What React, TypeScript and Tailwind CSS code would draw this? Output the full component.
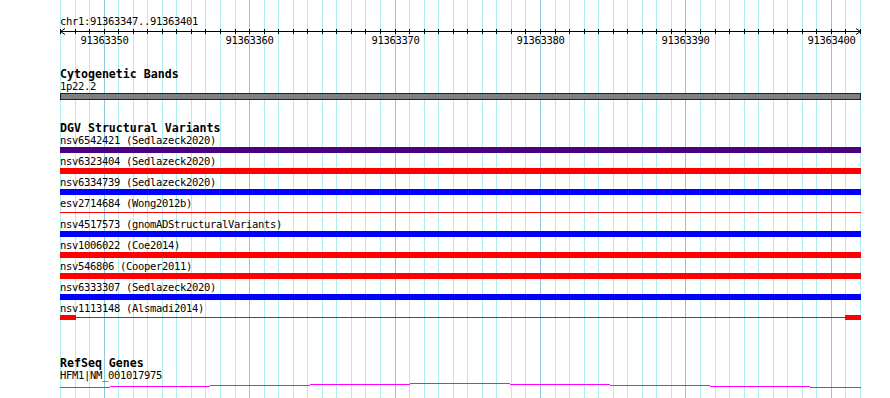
import React from "react";

const START = 91363347;
const N = 55;
const X0 = 60;
const W = 800;
const bx = (i: number) => Math.round(X0 + (i * W) / N);

const mono = { fontFamily: '"DejaVu Sans Mono", "Liberation Mono", monospace' };

function Grid() {
  const lines = [];
  for (let i = 0; i <= N; i++) {
    const major = (START + i) % 10 === 0;
    lines.push(
      <line
        key={i}
        x1={bx(i) + 0.5}
        x2={bx(i) + 0.5}
        y1={0}
        y2={398}
        stroke={major ? "#8cc6e2" : "#aeeeee"}
        strokeWidth={1}
      />
    );
  }
  return (
    <svg className="absolute left-0 top-0" width={890} height={398} shapeRendering="crispEdges">
      {lines}
    </svg>
  );
}

function Ruler() {
  const ticks = [];
  const labels = [];
  for (let i = 0; i <= N; i++) {
    ticks.push(<line key={i} x1={bx(i) + 0.5} x2={bx(i) + 0.5} y1={3} y2={8} stroke="#000" />);
    if ((START + i) % 10 === 0) {
      labels.push(
        <text
          key={"l" + i}
          x={bx(i) + 0.5}
          y={17.5}
          textAnchor="middle"
          fontSize={10.5}
          letterSpacing={-0.32}
          fill="#000"
          style={mono}
        >
          {START + i}
        </text>
      );
    }
  }
  return (
    <svg width={890} height={20} className="block -ml-[60px]" shapeRendering="crispEdges">
      <line x1={60} x2={861} y1={5.5} y2={5.5} stroke="#000" />
      <polyline points="65,2.5 60.5,5.5 65,8.5" fill="none" stroke="#000" shapeRendering="auto" />
      <polyline points="856,2.5 860.5,5.5 856,8.5" fill="none" stroke="#000" shapeRendering="auto" />
      {ticks}
      <g shapeRendering="auto">{labels}</g>
    </svg>
  );
}

type Row = { label: string; kind: "bar" | "line" | "ends"; color: string };

const rows: Row[] = [
  { label: "nsv6542421 (Sedlazeck2020)", kind: "bar", color: "#4b0082" },
  { label: "nsv6323404 (Sedlazeck2020)", kind: "bar", color: "#ff0000" },
  { label: "nsv6334739 (Sedlazeck2020)", kind: "bar", color: "#0000ff" },
  { label: "esv2714684 (Wong2012b)", kind: "line", color: "#ff0000" },
  { label: "nsv4517573 (gnomADStructuralVariants)", kind: "bar", color: "#0000ff" },
  { label: "nsv1006022 (Coe2014)", kind: "bar", color: "#ff0000" },
  { label: "nsv546806 (Cooper2011)", kind: "bar", color: "#ff0000" },
  { label: "nsv6333307 (Sedlazeck2020)", kind: "bar", color: "#0000ff" },
  { label: "nsv1113148 (Alsmadi2014)", kind: "ends", color: "#ff0000" },
];

function Label({ children }: { children: React.ReactNode }) {
  return (
    <div
      className="h-[10px] leading-[10px] text-[10.5px] tracking-[-0.32px] text-black whitespace-nowrap"
      style={mono}
    >
      {children}
    </div>
  );
}

function VariantRow({ r }: { r: Row }) {
  return (
    <div className="h-[21px]">
      <Label>{r.label}</Label>
      {r.kind === "bar" && <div className="mt-[2px] h-[6px] w-[801px]" style={{ backgroundColor: r.color }} />}
      {r.kind === "line" && (
        <div className="mt-[2px] h-[6px] w-[801px] flex flex-col">
          <div className="mt-[2px] h-px w-full bg-[#ff0000]" />
        </div>
      )}
      {r.kind === "ends" && (
        <div className="mt-[2px] h-[6px] w-[801px] flex items-start justify-between relative">
          <div className="h-[5px] w-[16px] bg-[#ff0000]" />
          <div className="absolute left-0 right-0 top-[2px] h-px bg-[#ff0000]" />
          <div className="h-[5px] w-[16px] bg-[#ff0000]" />
        </div>
      )}
    </div>
  );
}

function Heading({ children }: { children: React.ReactNode }) {
  return (
    <div className="h-[12px] leading-[12px] text-[11.6px] font-bold text-black whitespace-nowrap" style={mono}>
      {children}
    </div>
  );
}

function GeneLine() {
  const segs: [number, number, number][] = [
    [60, 110, 387],
    [110, 210, 386],
    [210, 310, 385],
    [310, 410, 384],
    [410, 510, 383],
    [510, 610, 384],
    [610, 710, 385],
    [710, 810, 386],
    [810, 861, 387],
  ];
  return (
    <svg width={801} height={10} className="block" shapeRendering="crispEdges">
      {segs.map(([a, b, y], k) => (
        <line key={k} x1={a - 60} x2={b - 60} y1={y - 380 + 0.5} y2={y - 380 + 0.5} stroke="#ff00ff" />
      ))}
    </svg>
  );
}

export default function App() {
  return (
    <div className="relative w-[890px] h-[398px] overflow-hidden bg-white">
      <Grid />
      <div className="relative pl-[60px] pt-[16px]">
        <Label>chr1:91363347..91363401</Label>
        <Ruler />
        <div className="mt-[22px]">
          <Heading>Cytogenetic Bands</Heading>
          <div className="mt-[1px]">
            <Label>1p22.2</Label>
          </div>
          <div className="mt-[2px] h-[7px] w-[801px] bg-[#808080] border border-[#222]" />
        </div>
        <div className="mt-[22px]">
          <Heading>DGV Structural Variants</Heading>
          <div className="mt-[1px]">
            {rows.map((r, i) => (
              <VariantRow key={i} r={r} />
            ))}
          </div>
        </div>
        <div className="mt-[33px]">
          <Heading>RefSeq Genes</Heading>
          <div className="mt-[1px]">
            <Label>HFM1|NM_001017975</Label>
          </div>
          <GeneLine />
        </div>
      </div>
    </div>
  );
}
